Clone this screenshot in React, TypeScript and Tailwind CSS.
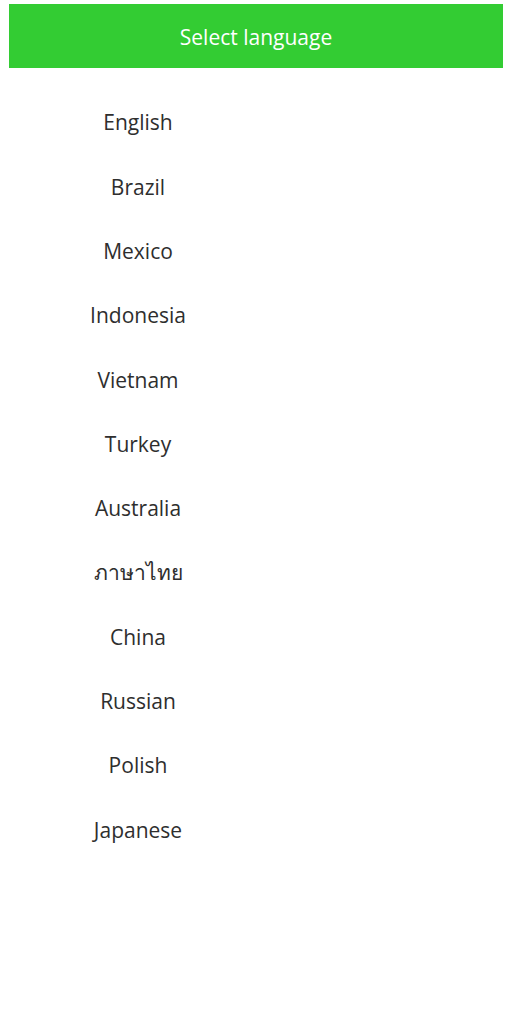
const languages = [
  "English",
  "Brazil",
  "Mexico",
  "Indonesia",
  "Vietnam",
  "Turkey",
  "Australia",
  "ภาษาไทย",
  "China",
  "Russian",
  "Polish",
  "Japanese",
];

export default function App() {
  return (
    <div
      className="min-h-[1024px] w-[514px] bg-white pt-[4px] pl-[9px] pr-[11px]"
      style={{ fontFamily: '"Open Sans", "Noto Sans", sans-serif' }}
    >
      <div className="flex h-[64px] items-center justify-center bg-[#33cc33]">
        <h1 className="pt-[3px] text-[21px] text-white">Select language</h1>
      </div>

      <ul className="w-[258px] pt-[23px]">
        {languages.map((lang) => (
          <li
            key={lang}
            className="flex h-[64.3px] items-center justify-center text-[21px] text-[#2e2e2e]"
          >
            {lang}
          </li>
        ))}
      </ul>
    </div>
  );
}
